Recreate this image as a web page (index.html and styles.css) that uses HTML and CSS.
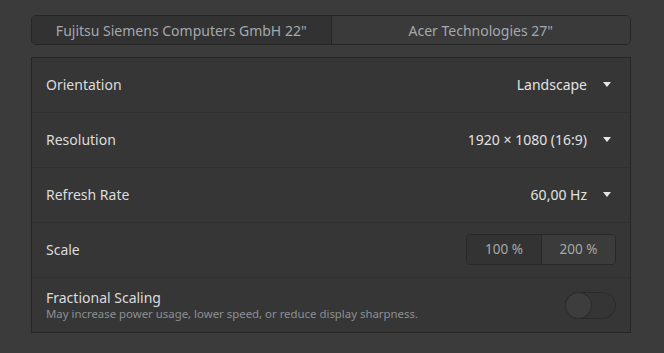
FILE: index.html
```html
<!DOCTYPE html>
<html lang="en">
<head>
    <meta charset="UTF-8">
    <title>Displays</title>
    <link rel="stylesheet" href="styles.css">
</head>
<body>
    <div class="page">
        <div class="tabs">
            <button class="tab active">Fujitsu Siemens Computers GmbH 22"</button>
            <button class="tab">Acer Technologies 27"</button>
        </div>

        <div class="panel">
            <div class="row">
                <span class="label">Orientation</span>
                <span class="combo">Landscape <span class="arrow"></span></span>
            </div>
            <div class="row">
                <span class="label">Resolution</span>
                <span class="combo">1920 × 1080 (16:9) <span class="arrow"></span></span>
            </div>
            <div class="row">
                <span class="label">Refresh Rate</span>
                <span class="combo">60,00 Hz <span class="arrow"></span></span>
            </div>
            <div class="row">
                <span class="label">Scale</span>
                <div class="scale">
                    <button class="scale-btn active">100 %</button>
                    <button class="scale-btn">200 %</button>
                </div>
            </div>
            <div class="row last">
                <div class="text">
                    <span class="label">Fractional Scaling</span>
                    <span class="sub">May increase power usage, lower speed, or reduce display sharpness.</span>
                </div>
                <span class="switch"><span class="knob"></span></span>
            </div>
        </div>
    </div>
</body>
</html>
```

FILE: styles.css
```css
body {
    margin: 0;
    background-color: #3b3b3b;
    font-family: "Noto Sans", "Open Sans", sans-serif;
    color: #dddddd;
}

.page {
    width: 600px;
    padding: 15px 0 0 31px;
}

.tabs {
    display: flex;
    height: 28px;
    border: 1px solid #262626;
    border-radius: 5px;
    overflow: hidden;
}

.tab {
    flex: 1;
    border: none;
    background-color: #3a3a3a;
    color: #a3a9ae;
    font-family: inherit;
    font-size: 14px;
    padding: 0;
}

.tab + .tab {
    border-left: 1px solid #262626;
}

.tab.active {
    background-color: #323232;
}

.panel {
    margin-top: 12px;
    border: 1px solid #262626;
    background-color: #363636;
}

.row {
    display: flex;
    align-items: center;
    justify-content: space-between;
    box-sizing: border-box;
    height: 55px;
    padding: 0 14px 2px 14px;
    border-top: 1px solid #303030;
}

.row:first-child {
    height: 54px;
    border-top: none;
}

.row.last {
    padding-bottom: 0;
}

.label {
    font-size: 14px;
    color: #dcdcdc;
}

.combo {
    display: flex;
    align-items: center;
    font-size: 14px;
    color: #e2e2e2;
}

.arrow {
    width: 0;
    height: 0;
    margin: 0 5px 0 16px;
    border-left: 4.5px solid transparent;
    border-right: 4.5px solid transparent;
    border-top: 5px solid #e6e6e6;
}

.scale {
    display: flex;
    height: 29px;
    border: 1px solid #282828;
    border-radius: 4px;
    overflow: hidden;
}

.scale-btn {
    width: 74px;
    border: none;
    background-color: #3b3b3b;
    color: #a7a7a7;
    font-family: inherit;
    font-size: 13.5px;
    padding: 0;
}

.scale-btn + .scale-btn {
    border-left: 1px solid #282828;
}

.scale-btn.active {
    background-color: #333333;
}

.text {
    display: flex;
    flex-direction: column;
    gap: 1px;
}

.text .label {
    line-height: 17px;
}

.sub {
    font-size: 11.4px;
    color: #8b9094;
    line-height: 14px;
}

.switch {
    position: relative;
    width: 49px;
    height: 25px;
    border: 1px solid #2a2a2a;
    border-radius: 14px;
    background-color: #353535;
}

.knob {
    position: absolute;
    left: -1px;
    top: -1px;
    width: 25px;
    height: 25px;
    border: 1px solid #2a2a2a;
    border-radius: 50%;
    background-color: #3d3d3d;
}
```
